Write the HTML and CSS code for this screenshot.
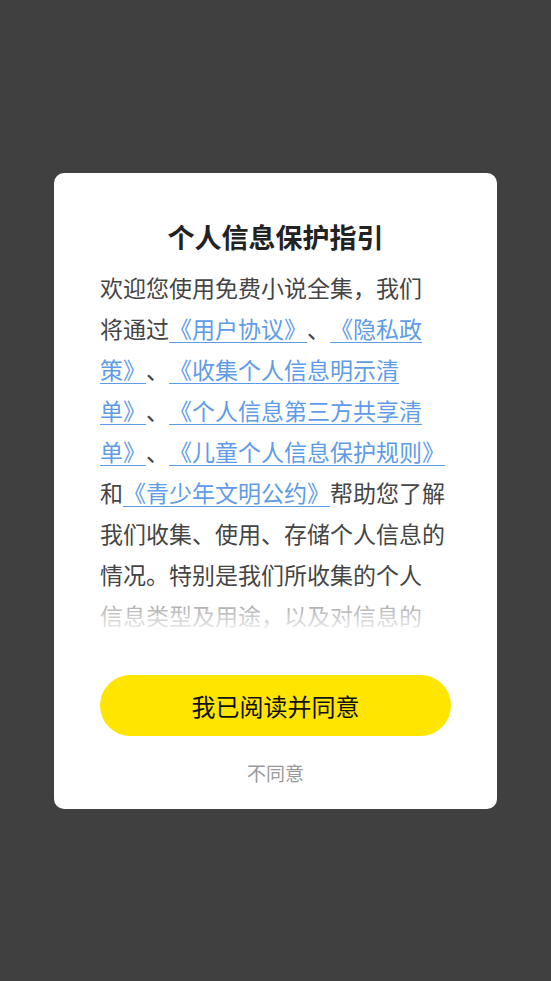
FILE: index.html
```html
<!DOCTYPE html>
<html lang="zh-CN">
<head>
<meta charset="utf-8">
<title>个人信息保护指引</title>
<link rel="stylesheet" href="styles.css">
</head>
<body>
<div class="overlay">
  <div class="dialog">
    <h1 class="dialog-title">个人信息保护指引</h1>
    <div class="dialog-body">
      <p class="dialog-text">欢迎您使用免费小说全集，我们<br>将通过<a class="link">《用户协议》</a>、<a class="link">《隐私政<br>策》</a>、<a class="link">《收集个人信息明示清<br>单》</a>、<a class="link">《个人信息第三方共享清<br>单》</a>、<a class="link">《儿童个人信息保护规则》</a><br>和<a class="link">《青少年文明公约》</a>帮助您了解<br>我们收集、使用、存储个人信息的<br>情况。特别是我们所收集的个人<br>信息类型及用途，以及对信息的</p>
      <div class="fade"></div>
    </div>
    <button class="btn-agree">我已阅读并同意</button>
    <div class="btn-disagree">不同意</div>
  </div>
</div>
</body>
</html>
```
FILE: styles.css
```css
* { box-sizing: border-box; }
html, body {
  margin: 0;
  padding: 0;
  height: 100%;
}
body {
  background: #404040;
  font-family: "Noto Sans CJK SC", "Noto Sans", sans-serif;
  text-spacing-trim: space-all;
}
.overlay {
  height: 100%;
  display: flex;
  align-items: center;
  justify-content: center;
}
.dialog {
  width: 443px;
  background: #ffffff;
  border-radius: 10px;
  padding: 46px 46px 22px;
  display: flex;
  flex-direction: column;
}
.dialog-title {
  margin: 0 0 12px;
  font-size: 27px;
  line-height: 36px;
  font-weight: 700;
  color: #222222;
  text-align: center;
}
.dialog-body {
  position: relative;
  height: 369px;
  overflow: hidden;
}
.dialog-text {
  margin: 0;
  font-size: 23px;
  line-height: 41px;
  color: #454545;
  white-space: nowrap;
  text-spacing-trim: space-all;
}
.link {
  color: #5e9ce8;
  text-decoration: underline;
  text-decoration-thickness: 1px;
  text-underline-offset: 4px;
}
.fade {
  position: absolute;
  left: 0;
  right: 0;
  bottom: 0;
  height: 46px;
  background: linear-gradient(to bottom, rgba(255,255,255,0.35), #ffffff);
}
.btn-agree {
  margin-top: 39px;
  height: 61px;
  border: none;
  border-radius: 31px;
  background: #ffe500;
  color: #111111;
  font-family: inherit;
  font-size: 24px;
  padding: 0;
}
.btn-disagree {
  margin-top: 23px;
  text-align: center;
  font-size: 19px;
  line-height: 28px;
  color: #9a9a9a;
}
```
